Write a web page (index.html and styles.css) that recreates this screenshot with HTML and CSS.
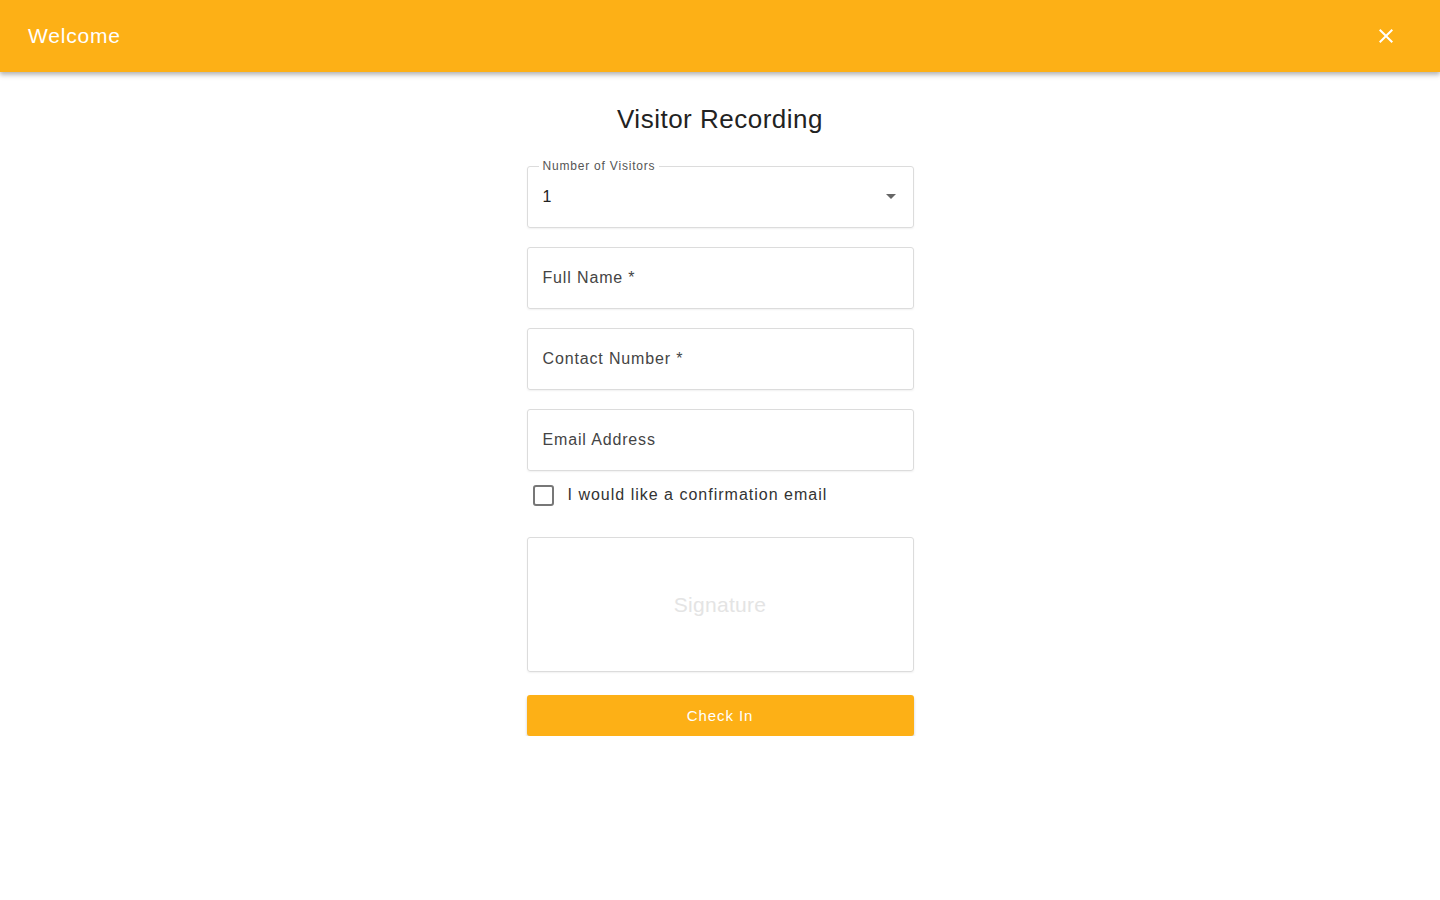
FILE: index.html
```html
<!DOCTYPE html>
<html>
<head>
<meta charset="utf-8">
<link rel="stylesheet" href="styles.css">
</head>
<body>
<header class="appbar">
  <div class="appbar-title">Welcome</div>
  <button class="close-btn" aria-label="Close">
    <svg width="24" height="24" viewBox="0 0 24 24"><path d="M19 6.41 17.59 5 12 10.59 6.41 5 5 6.41 10.59 12 5 17.59 6.41 19 12 13.41 17.59 19 19 17.59 13.41 12z" fill="#fff"/></svg>
  </button>
</header>
<main class="content">
  <form class="form">
    <h1 class="form-title">Visitor Recording</h1>
    <div class="field field-select">
      <span class="legend">Number of Visitors</span>
      <span class="value">1</span>
      <svg class="caret" width="24" height="24" viewBox="0 0 24 24"><path d="M7 10l5 5 5-5z" fill="#666"/></svg>
    </div>
    <div class="field"><span class="placeholder">Full Name *</span></div>
    <div class="field"><span class="placeholder">Contact Number *</span></div>
    <div class="field field-last"><span class="placeholder">Email Address</span></div>
    <label class="check-row">
      <span class="checkbox"></span>
      <span class="check-label">I would like a confirmation email</span>
    </label>
    <div class="signature"><span>Signature</span></div>
    <button type="button" class="submit">Check In</button>
  </form>
</main>
</body>
</html>
```
FILE: styles.css
```css
* { box-sizing: border-box; }
html, body { margin: 0; padding: 0; background: #fff; }
body { font-family: "Liberation Sans", Arial, sans-serif; color: #222; }

.appbar {
  height: 72px;
  background: #fdb016;
  display: flex;
  align-items: center;
  justify-content: space-between;
  padding: 0 28px;
  box-shadow: 0 2px 4px rgba(0,0,0,0.2), 0 4px 5px rgba(0,0,0,0.12);
  position: relative;
}
.appbar-title { color: #fff; font-size: 21px; letter-spacing: 0.8px; }
.close-btn {
  background: none; border: 0; padding: 0; margin-right: 14px;
  width: 24px; height: 24px; display: flex; cursor: pointer;
}

.content { display: flex; justify-content: center; }
.form { width: 387px; display: flex; flex-direction: column; padding-top: 31px; }
.form-title {
  margin: 0 0 31px; text-align: center; font-weight: 400;
  font-size: 26px; color: #222; line-height: 32px; letter-spacing: 0.5px;
}

.field {
  height: 62px;
  border: 1px solid #dcdcdc;
  border-radius: 3px;
  box-shadow: 0 1px 2px rgba(0,0,0,0.06);
  display: flex; align-items: center;
  padding: 0 15px;
  margin-bottom: 19px;
  position: relative;
}
.field-last { margin-bottom: 0; }
.placeholder { font-size: 16px; color: #444; letter-spacing: 0.85px; }
.field-select { justify-content: space-between; padding-right: 10px; }
.field-select .value { font-size: 16px; color: #222; margin-top: -1px; }
.legend {
  position: absolute; top: -8px; left: 11px;
  background: #fff; padding: 0 4px;
  font-size: 12px; color: #555; line-height: 14px; letter-spacing: 0.8px;
}
.caret { margin-top: -2px; }

.check-row { display: flex; align-items: center; margin: 10px 0 0 6px; height: 28px; }
.checkbox {
  width: 21px; height: 21px; border: 2px solid #777; border-radius: 3px;
  margin-right: 14px;
}
.check-label { font-size: 16px; color: #333; letter-spacing: 1px; }

.signature {
  margin-top: 28px;
  height: 135px;
  border: 1px solid #dcdcdc;
  border-radius: 3px;
  box-shadow: 0 1px 2px rgba(0,0,0,0.06);
  display: flex; align-items: center; justify-content: center;
}
.signature span { font-size: 21px; color: #e4e4e4; letter-spacing: 0.3px; }

.submit {
  margin-top: 23px;
  height: 41px;
  background: #fdb016;
  border: 0; border-radius: 3px;
  color: #fff; font-size: 15px; letter-spacing: 0.9px;
  font-family: "Liberation Sans", Arial, sans-serif;
  box-shadow: 0 2px 3px rgba(0,0,0,0.2);
}
```
